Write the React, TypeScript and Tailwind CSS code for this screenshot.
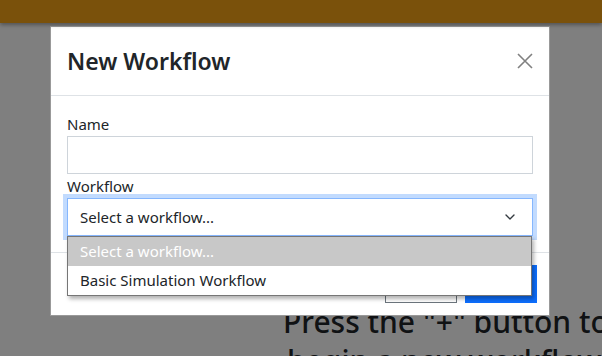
import { ChevronDown } from "lucide-react";

const font = { fontFamily: '"Noto Sans", "Open Sans", sans-serif' };

export default function App() {
  return (
    <div className="relative w-[602px] h-[356px] overflow-hidden bg-white text-[#212529]" style={font}>
      {/* page behind the modal */}
      <div className="relative z-20 h-[23px] bg-[#7a510b] shadow-[0_2px_4px_rgba(0,0,0,0.35)]" />
      <div className="pl-[283px] pt-[279px] text-[30px] leading-[39px] font-medium whitespace-nowrap">
        <div>Press the "+" button to</div>
        <div className="pl-[4px]">begin a new workflow</div>
      </div>

      {/* backdrop */}
      <div className="absolute inset-0 bg-black/50" />

      {/* modal */}
      <div className="absolute left-[50px] top-[26px] z-10 w-[500px] border border-black/40 bg-white">
        <div className="flex items-center justify-between border-b border-[#dee2e6] p-4">
          <h5 className="text-[23px] leading-[36px] font-semibold">New Workflow</h5>
          <svg width="16" height="16" viewBox="0 0 16 16" className="text-[#808080]">
            <path d="M1 1L15 15M15 1L1 15" stroke="currentColor" strokeWidth="1.6" />
          </svg>
        </div>

        <div className="p-4">
          <label className="block text-[15px] leading-6">Name</label>
          <div className="h-[38px] border border-[#ced4da]" />
          <label className="block text-[15px] leading-6">Workflow</label>
          <div className="relative">
            <div className="flex h-[38px] items-center justify-between border border-[#86b7fe] pl-3 pr-[14px] text-[15px] shadow-[0_0_0_4px_rgba(13,110,253,0.25)]">
              <span>Select a workflow...</span>
              <ChevronDown size={16} strokeWidth={2} className="text-[#343a40]" />
            </div>
            {/* open options list */}
            <div className="absolute left-0 right-[1px] top-[38px] z-10 border border-[#767676] bg-white text-[15px] shadow-[2px_3px_4px_rgba(0,0,0,0.3)]">
              <div className="h-[29px] bg-[#c8c8c8] pl-3 leading-[29px] text-white">Select a workflow...</div>
              <div className="h-[29px] pl-3 leading-[29px]">Basic Simulation Workflow</div>
            </div>
          </div>
        </div>

        <div className="flex justify-end gap-2 border-t border-[#dee2e6] px-3 py-3">
          <button className="h-[38px] w-[72px] border border-[#6c757d] text-[15px] text-[#6c757d]">Close</button>
          <button className="h-[38px] w-[72px] bg-[#0d6efd] text-[15px] text-white">Create</button>
        </div>
      </div>
    </div>
  );
}
